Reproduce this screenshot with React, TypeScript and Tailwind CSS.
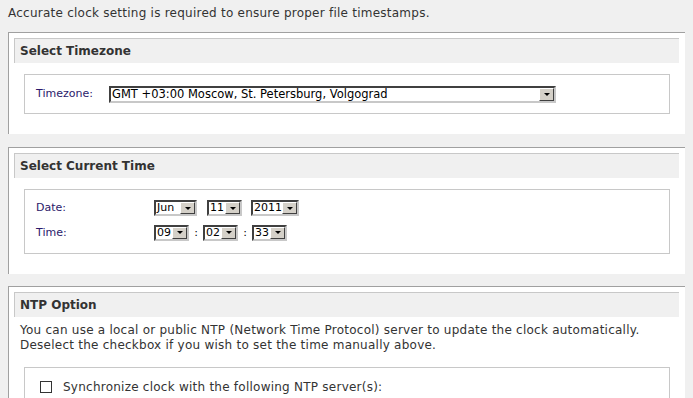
import React from 'react';

const Select: React.FC<{ value: string; width: string; tall?: boolean }> = ({ value, width, tall }) => (
  <div
    className={`inline-flex ${width} ${
      tall ? 'h-[17px] text-[11.5px]' : 'h-[16px] text-[11px]'
    } border-2 border-t-[#404040] border-l-[#404040] border-r-[#c8c8c8] border-b-[#c8c8c8] bg-white`}
  >
    <span className="flex-1 pl-[1px] leading-[12px] text-black overflow-hidden whitespace-nowrap">
      {value}
    </span>
    <span className="w-[15px] h-full flex items-center justify-center bg-[#d4d0c8] border border-t-white border-l-white border-r-[#404040] border-b-[#404040]">
      <span className="w-0 h-0 border-l-[3px] border-r-[3px] border-t-[3px] border-l-transparent border-r-transparent border-t-black" />
    </span>
  </div>
);

const Section: React.FC<{ title: string; children: React.ReactNode; className?: string }> = ({
  title,
  children,
  className = '',
}) => (
  <div className={`ml-[8px] w-[677px] bg-white border-l border-t border-[#a0a0a0] pt-[5px] ${className}`}>
    <div className="ml-[5px] mr-[6px] h-[25px] bg-[#f0f0f0] border-t border-l border-[#c8c8c8] pl-[5px] flex items-center">
      <h2 className="text-[12px] font-bold text-[#333]">{title}</h2>
    </div>
    {children}
  </div>
);

export default function App() {
  return (
    <div className="w-[693px] h-[398px] overflow-hidden bg-[#f0f0f0] font-['DejaVu_Sans',sans-serif] text-[11px] text-[#333]">
      <p className="pl-[8px] pt-[6px] h-[32px] leading-[14px] text-[12px] tracking-[0.24px]">
        Accurate clock setting is required to ensure proper file timestamps.
      </p>

      <Section title="Select Timezone" className="pb-[20px]">
        <div className="mt-[11px] mx-[15px] h-[40px] border border-[#c8c8c8] pl-[11px] flex items-center">
          <span className="w-[73px] text-[#2b1a6b]">Timezone:</span>
          <Select value="GMT +03:00 Moscow, St. Petersburg, Volgograd" width="w-[447px]" tall />
        </div>
      </Section>

      <Section title="Select Current Time" className="mt-[13px] pb-[20px]">
        <div className="mt-[11px] mx-[15px] h-[65px] border border-[#c8c8c8] pl-[11px] pt-[10px] flex flex-col gap-[8px]">
          <div className="flex items-center">
            <span className="w-[118px] text-[#2b1a6b]">Date:</span>
            <Select value="Jun" width="w-[43px]" />
            <span className="w-[10px]" />
            <Select value="11" width="w-[35px]" />
            <span className="w-[9px]" />
            <Select value="2011" width="w-[48px]" />
          </div>
          <div className="flex items-center">
            <span className="w-[118px] text-[#2b1a6b]">Time:</span>
            <Select value="09" width="w-[35px]" />
            <span className="w-[14px] text-center text-black">:</span>
            <Select value="02" width="w-[35px]" />
            <span className="w-[14px] text-center text-black">:</span>
            <Select value="33" width="w-[35px]" />
          </div>
        </div>
      </Section>

      <Section title="NTP Option" className="mt-[12px] pb-[20px]">
        <p className="pl-[11px] pt-[6px] leading-[15px] text-[12px] tracking-[0.24px]">
          You can use a local or public NTP (Network Time Protocol) server to update the clock automatically.
          <br />
          Deselect the checkbox if you wish to set the time manually above.
        </p>
        <div className="mt-[14px] mx-[15px] h-[60px] border border-[#c8c8c8] pl-[15px] pt-[12px] flex items-start">
          <span className="mt-[1px] w-[12px] h-[12px] border border-[#333] bg-white" />
          <span className="ml-[11px] leading-[14px] text-[12px] tracking-[0.24px]">
            Synchronize clock with the following NTP server(s):
          </span>
        </div>
      </Section>
    </div>
  );
}
